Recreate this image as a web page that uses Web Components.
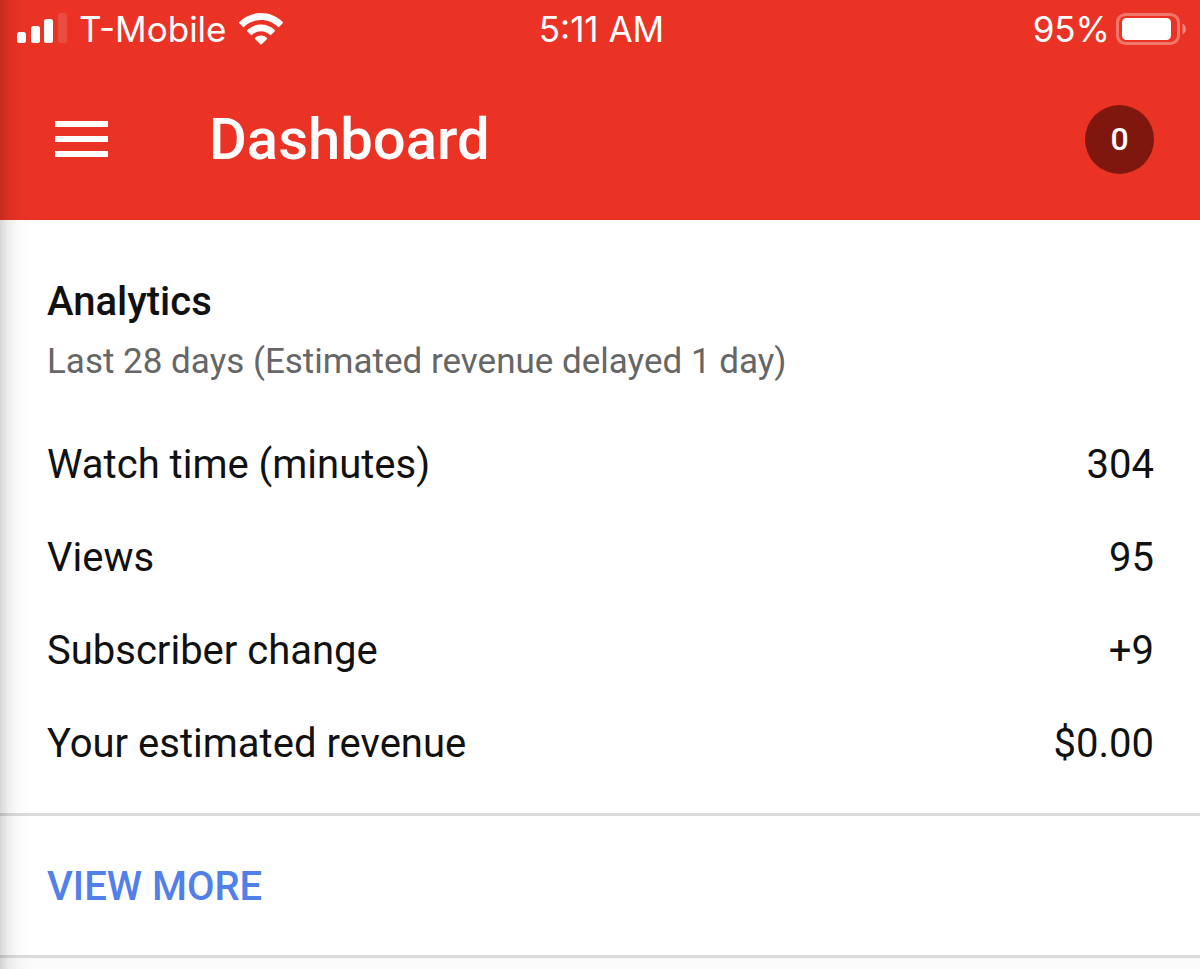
<!DOCTYPE html>
<html lang="en">
<head>
<meta charset="utf-8">
<meta name="viewport" content="width=device-width, initial-scale=1">
<title>Dashboard</title>
<style>
  html { background: #fafafa; }
  body { margin: 0; font-family: Roboto, "Liberation Sans", sans-serif; color: #111; }
</style>
</head>
<body>
<studio-screen>
  <status-bar slot="top" carrier="T-Mobile" time="5:11 AM" battery="95%"></status-bar>
  <app-bar slot="top" count="0">Dashboard</app-bar>
  <analytics-card>
    <span slot="title">Analytics</span>
    <span slot="subtitle">Last 28 days (Estimated revenue delayed 1 day)</span>
    <a slot="action" href="#analytics">VIEW MORE</a>
  </analytics-card>
</studio-screen>
<script>
class BaseElement extends HTMLElement {
  connectedCallback() {
    if (!this.shadowRoot) this.attachShadow({ mode: "open" }).innerHTML = this.render();
  }
}

customElements.define("studio-screen", class extends BaseElement {
  render() {
    return `
      <style>
        :host { display: block; position: relative; min-height: 100vh; }
        header { background: #ea3325; color: #fff; }
        /* shade cast along the left edge of the screen */
        .edge {
          position: absolute; inset: 0 auto 0 0; width: 32px; pointer-events: none;
          background: linear-gradient(to right, rgba(0,0,0,.16), rgba(0,0,0,.07) 25%, rgba(0,0,0,.02) 55%, rgba(0,0,0,0));
        }
      </style>
      <header><slot name="top"></slot></header>
      <main><slot></slot></main>
      <div class="edge"></div>`;
  }
});

customElements.define("status-bar", class extends BaseElement {
  render() {
    return `
      <style>
        :host {
          display: grid; grid-template-columns: 1fr auto 1fr; align-items: center;
          height: 58px; padding: 0 14px 0 17px;
          font: 400 35px/40px Inter, "Liberation Sans", sans-serif;
        }
        div { display: flex; align-items: center; }
        .left { gap: 12px; }
        .right { justify-content: flex-end; gap: 6px; }
        svg { display: block; fill: #fff; flex: none; }
      </style>
      <div class="left">
        <svg width="50" height="32" viewBox="0 0 50 32" aria-label="Signal">
          <rect x="0" y="19" width="9" height="11" rx="2.5"/>
          <rect x="14" y="13" width="9" height="17" rx="2.5"/>
          <rect x="27" y="6" width="9" height="24" rx="2.5"/>
          <rect x="41" y="0" width="9" height="30" rx="2.5" opacity=".13"/>
        </svg>
        <span>${this.getAttribute("carrier")}</span>
        <svg width="44" height="32" viewBox="0 0 44 32" aria-label="Wi-Fi">
          <path d="M22 0C13.500 0 5.800 3.400.3 8.900a1 1 0 0 0 0 1.400l3.500 3.500a1 1 0 0 0 1.400 0C9.600 9.500 15.500 7 22 7s12.400 2.500 16.800 6.800a1 1 0 0 0 1.400 0l3.500-3.500a1 1 0 0 0 0-1.400C38.200 3.400 30.500 0 22 0Z"/>
          <path d="M22 11.500c-5.300 0-10.100 2.100-13.600 5.500a1 1 0 0 0 0 1.400l3.400 3.400a1 1 0 0 0 1.400 0A12.700 12.700 0 0 1 22 18.300c3.400 0 6.500 1.300 8.800 3.500a1 1 0 0 0 1.400 0l3.400-3.400a1 1 0 0 0 0-1.400A19.500 19.500 0 0 0 22 11.500Z"/>
          <path d="M22 22.500c-2.300 0-4.300.9-5.800 2.300a1 1 0 0 0 0 1.400l5.100 5.100a1 1 0 0 0 1.400 0l5.100-5.100a1 1 0 0 0 0-1.400A8.400 8.400 0 0 0 22 22.500Z"/>
        </svg>
      </div>
      <span>${this.getAttribute("time")}</span>
      <div class="right">
        <span>${this.getAttribute("battery")}</span>
        <svg width="70" height="32" viewBox="0 0 70 32" aria-label="Battery">
          <rect x="1.500" y="1.500" width="61" height="29" rx="8" fill="none" stroke="#fff" stroke-width="3" opacity=".33"/>
          <rect x="6" y="5" width="49" height="22" rx="4.500"/>
          <path d="M66.500 10.500c4.500 2 4.500 9 0 11Z" opacity=".42"/>
        </svg>
      </div>`;
  }
});

customElements.define("app-bar", class extends BaseElement {
  render() {
    return `
      <style>
        :host { display: flex; align-items: center; height: 162px; padding: 0 46px 0 55px; }
        button {
          padding: 0; border: 0; background: none; color: inherit; font: inherit;
          cursor: pointer; flex: none;
        }
        .menu svg { display: block; fill: #fff; }
        h1 { flex: 1; margin: 0 0 0 101px; font-size: 58px; line-height: 68px; font-weight: 500; }
        .count {
          width: 69px; height: 69px; border-radius: 50%; background: #80170f;
          font-size: 32px; line-height: 38px; font-weight: 500;
        }
      </style>
      <button class="menu" type="button" aria-label="Menu">
        <svg width="53" height="36" viewBox="0 0 53 36">
          <rect width="53" height="6"/><rect y="15" width="53" height="6"/><rect y="30" width="53" height="6"/>
        </svg>
      </button>
      <h1><slot></slot></h1>
      <button class="count" type="button">${this.getAttribute("count")}</button>`;
  }
});

customElements.define("analytics-card", class extends BaseElement {
  render() {
    const metrics = [
      ["Watch time (minutes)", "304"],
      ["Views", "95"],
      ["Subscriber change", "+9"],
      ["Your estimated revenue", "$0.00"]
    ];
    return `
      <style>
        :host { display: block; background: #fff; border-bottom: 3px solid #dcdcdc; }
        .body { padding: 58px 46px 23px 47px; }
        h2 { margin: 0; font-size: 40px; line-height: 48px; font-weight: 500; }
        p { margin: 12px 0 32px; font-size: 35px; line-height: 48px; color: #666; }
        table { width: 100%; border-collapse: collapse; font-size: 40px; line-height: 48px; }
        th, td { padding: 0; height: 93px; font-weight: 400; text-align: left; }
        td { text-align: right; }
        .action { padding: 47px 47px 44px; border-top: 3px solid #dcdcdc; font-size: 40px; line-height: 48px; }
        ::slotted(a) { color: #5180ea; font-weight: 500; text-decoration: none; }
      </style>
      <section class="body">
        <h2><slot name="title"></slot></h2>
        <p><slot name="subtitle"></slot></p>
        <table>
          <tbody>${metrics.map(([name, value]) => `<tr><th scope="row">${name}</th><td>${value}</td></tr>`).join("")}</tbody>
        </table>
      </section>
      <div class="action"><slot name="action"></slot></div>`;
  }
});
</script>
</body>
</html>
